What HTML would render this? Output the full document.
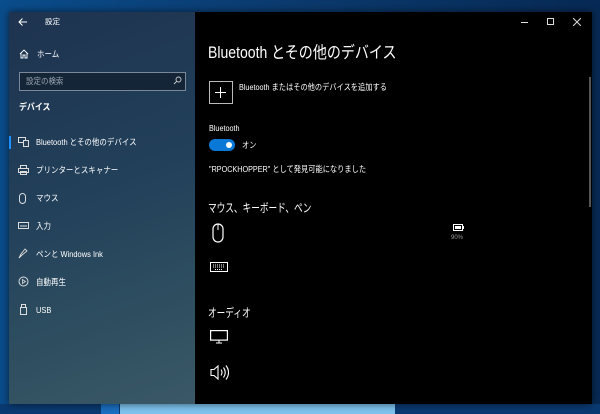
<!DOCTYPE html>
<html><head><meta charset="utf-8"><style>
*{margin:0;padding:0;box-sizing:border-box}
body{width:600px;height:414px;overflow:hidden;position:relative;background:linear-gradient(90deg,#0a4d8c 0%,#0b3a6e 50%,#072a55 100%);font-family:"Liberation Sans","Noto Sans CJK JP",sans-serif;color:#fff}
.t{position:absolute;white-space:nowrap;line-height:1;transform-origin:0 50%}
#win{position:absolute;left:9px;top:12px;width:583px;height:392px;background:#000;box-shadow:0 0 8px rgba(0,0,0,.6)}
#side{position:absolute;left:9px;top:12px;width:186px;height:392px;background:linear-gradient(160deg,#1e3350 0%,#22405a 45%,#2e4e60 75%,#3a5866 100%)}
.s{font-size:8.5px;color:#fff;transform:scaleX(.88)}
.m{font-size:8.5px;transform:scaleX(.85)}
svg{position:absolute}
</style></head><body>
<div style="position:absolute;left:0;top:404px;width:600px;height:10px;background:#0a3a72"></div>
<div style="position:absolute;left:120px;top:404px;width:275px;height:10px;background:#7ec4ef"></div>
<div style="position:absolute;left:101px;top:404px;width:18px;height:10px;background:#1a6fc2"></div>
<div id="win"></div>
<div id="side"></div>
<div style="position:absolute;left:589px;top:77px;width:2px;height:130px;background:#555"></div>
<svg style="left:18px;top:17px" width="10" height="10" viewBox="0 0 10 10"><path d="M9 5H1M4.5 1.5L1 5l3.5 3.5" stroke="#fff" fill="none" stroke-width="1"/></svg>
<div class="t" style="left:45px;top:18px;font-size:7.5px">設定</div>
<div style="position:absolute;left:521px;top:22px;width:7px;height:1px;background:#ddd"></div>
<div style="position:absolute;left:547px;top:18px;width:7px;height:7px;border:1px solid #ddd"></div>
<svg style="left:573px;top:18px" width="8" height="8" viewBox="0 0 8 8"><path d="M0 0L8 8M8 0L0 8" stroke="#ddd" stroke-width="1"/></svg>
<svg style="left:19px;top:49px" width="10" height="10" viewBox="0 0 10 10"><path d="M1 5L5 1l4 4M2 4v5h2V6h2v3h2V4" stroke="#fff" fill="none" stroke-width=".9"/></svg>
<div class="t s" style="left:37px;top:50px">ホーム</div>
<div style="position:absolute;left:19px;top:72px;width:167px;height:19px;border:1px solid #7a8899;background:#152538"></div>
<div class="t" style="left:26px;top:77px;font-size:8.5px;color:#9aa6b2;transform:scaleX(.88)">設定の検索</div>
<svg style="left:173px;top:76px" width="9" height="9" viewBox="0 0 9 9"><circle cx="5.5" cy="3.5" r="2.5" stroke="#ccc" fill="none" stroke-width=".9"/><path d="M3.7 5.3L1 8" stroke="#ccc" stroke-width=".9"/></svg>
<div class="t" style="left:19px;top:103px;font-size:9px;font-weight:bold;transform:scaleX(.88)">デバイス</div>
<div style="position:absolute;left:9px;top:136px;width:2px;height:13px;background:#1e90ff"></div>
<svg style="left:18px;top:137px" width="11" height="10" viewBox="0 0 11 10"><rect x=".5" y=".5" width="7" height="5" stroke="#ddd" fill="none"/><rect x="5.5" y="3.5" width="5" height="6" stroke="#ddd" fill="#2a4058"/></svg>
<div class="t s" style="left:36px;top:138px">Bluetooth とその他のデバイス</div>
<svg style="left:18px;top:165px" width="11" height="10" viewBox="0 0 11 10"><rect x="2.5" y=".5" width="6" height="3" stroke="#ddd" fill="none"/><rect x=".5" y="3.5" width="10" height="4" stroke="#ddd" fill="none"/><rect x="2.5" y="6.5" width="6" height="3" stroke="#ddd" fill="none"/></svg>
<div class="t s" style="left:36px;top:166px">プリンターとスキャナー</div>
<svg style="left:19px;top:193px" width="8" height="11" viewBox="0 0 8 11"><rect x=".5" y=".5" width="6" height="10" rx="3" stroke="#ddd" fill="none"/></svg>
<div class="t s" style="left:36px;top:194px">マウス</div>
<svg style="left:18px;top:222px" width="11" height="7" viewBox="0 0 11 7"><rect x=".5" y=".5" width="10" height="6" stroke="#ddd" fill="none"/><path d="M2 4h7" stroke="#ddd"/></svg>
<div class="t s" style="left:36px;top:222px">入力</div>
<svg style="left:18px;top:248px" width="11" height="11" viewBox="0 0 11 11"><path d="M1 10l2-4 4-5 2 2-5 4z" stroke="#ddd" fill="none" stroke-width=".9"/></svg>
<div class="t s" style="left:36px;top:250px">ペンと Windows Ink</div>
<svg style="left:18px;top:276px" width="11" height="11" viewBox="0 0 11 11"><circle cx="5.5" cy="5.5" r="4.5" stroke="#ddd" fill="none"/><path d="M4.5 3.5v4l3-2z" stroke="#ddd" fill="none" stroke-width=".8"/></svg>
<div class="t s" style="left:36px;top:278px">自動再生</div>
<svg style="left:20px;top:304px" width="7" height="11" viewBox="0 0 7 11"><rect x=".5" y="3.5" width="6" height="7" stroke="#ddd" fill="none"/><rect x="1.5" y=".5" width="4" height="3" stroke="#ddd" fill="none"/></svg>
<div class="t s" style="left:36px;top:306px">USB</div>
<div class="t" style="left:208px;top:45px;font-size:16.5px;transform:scaleX(.85)">Bluetooth とその他のデバイス</div>
<div style="position:absolute;left:209px;top:81px;width:24px;height:23px;border:1px solid #bbb"></div>
<svg style="left:215px;top:87px" width="11" height="11" viewBox="0 0 11 11"><path d="M5.5 0v11M0 5.5h11" stroke="#fff" stroke-width="1"/></svg>
<div class="t m" style="left:239px;top:83px">Bluetooth またはその他のデバイスを追加する</div>
<div class="t m" style="left:209px;top:124px">Bluetooth</div>
<div style="position:absolute;left:209px;top:139px;width:26px;height:12px;border-radius:6px;background:#0a78d7"></div>
<div style="position:absolute;left:226px;top:142px;width:6px;height:6px;border-radius:3px;background:#fff"></div>
<div class="t m" style="left:242px;top:141px">オン</div>
<div class="t m" style="left:209px;top:165px">"RPOCKHOPPER" として発見可能になりました</div>
<div class="t" style="left:208px;top:202px;font-size:12px;transform:scaleX(.72)">マウス、キーボード、ペン</div>
<svg style="left:212px;top:223px" width="12" height="20" viewBox="0 0 12 20"><rect x="1" y="1" width="10" height="18" rx="5" stroke="#fff" fill="none" stroke-width="1.2"/><path d="M6 1v6" stroke="#fff" stroke-width="1"/></svg>
<svg style="left:453px;top:224px" width="11" height="7" viewBox="0 0 11 7"><rect x=".5" y=".5" width="9" height="6" stroke="#fff" fill="none"/><rect x="2" y="2" width="6" height="3" fill="#fff"/><rect x="10" y="2" width="1" height="3" fill="#fff"/></svg>
<div class="t" style="left:451px;top:235px;font-size:6px;color:#999">90%</div>
<svg style="left:210px;top:262px" width="18" height="10" viewBox="0 0 18 10"><rect x=".5" y=".5" width="17" height="9" stroke="#fff" fill="none"/><path d="M3 3h12M3 5h12M5 7.5h8" stroke="#fff" stroke-dasharray="1 1"/></svg>
<div class="t" style="left:208px;top:307px;font-size:12px;transform:scaleX(.72)">オーディオ</div>
<svg style="left:210px;top:330px" width="18" height="14" viewBox="0 0 18 14"><rect x=".6" y=".6" width="16.8" height="9.5" stroke="#fff" fill="none" stroke-width="1.2"/><path d="M9 10v3M6 13h6" stroke="#fff"/></svg>
<svg style="left:210px;top:364px" width="20" height="17" viewBox="0 0 20 17"><path d="M1 5.5h3L8 2v13l-4-3.5H1z" stroke="#fff" fill="none" stroke-width="1.1"/><path d="M11 5.5q2 3 0 6M13.5 3.5q3.5 5 0 10M16 1.5q5 7 0 14" stroke="#fff" fill="none" stroke-width="1.1"/></svg>
</body></html>
